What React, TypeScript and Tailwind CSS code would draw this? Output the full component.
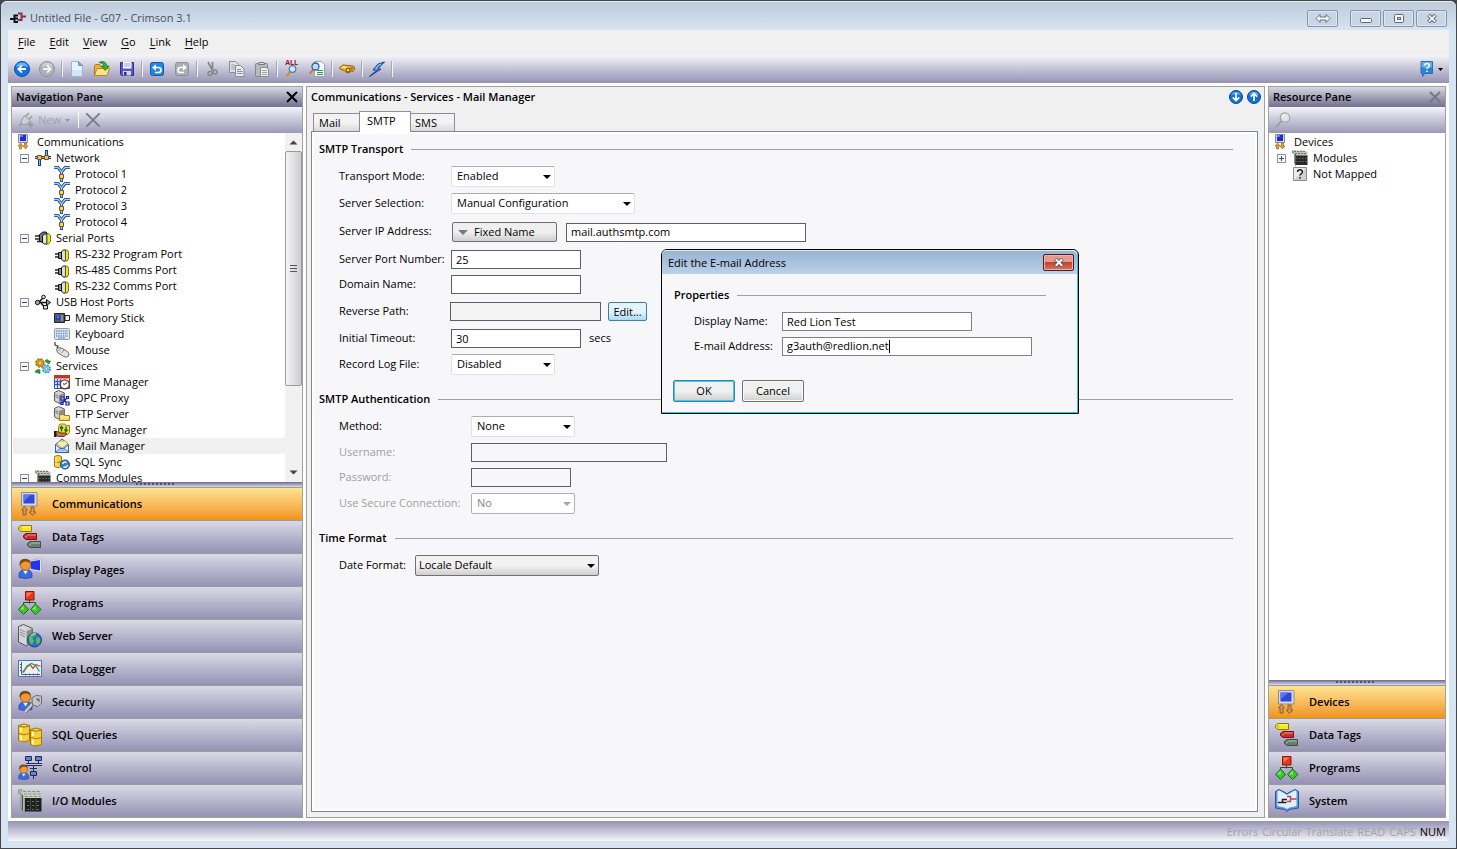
import type { ReactNode } from "react";
import { clsx } from "clsx";

type Art = () => ReactNode;

const Svg16 = ({ children }: { children: ReactNode }) => (
  <svg viewBox="0 0 16 16" className="block h-4 w-4 shrink-0" aria-hidden="true">
    {children}
  </svg>
);

const Svg24 = ({ children }: { children: ReactNode }) => (
  <svg viewBox="0 0 24 24" className="block h-6 w-6 shrink-0" aria-hidden="true">
    {children}
  </svg>
);

/* ── Toolbar icons ── */

const BackIcon = () => (
  <Svg16>
    <circle cx="8" cy="8" r="7.5" fill="#1274d8" stroke="#0b4ea6" />
    <path d="M2 6a6.3 6.3 0 0 1 12 0Q8 4 2 6" fill="#63b4f4" />
    <path d="M12 8H4.5M8 4.3 4.3 8 8 11.7" fill="none" stroke="#fff" strokeWidth="1.8" />
  </Svg16>
);

const ForwardIcon = () => (
  <Svg16>
    <circle cx="8" cy="8" r="7.5" fill="#b2b2b6" stroke="#8f8f95" />
    <path d="M2 6a6.3 6.3 0 0 1 12 0Q8 4 2 6" fill="#cfcfd2" />
    <path d="M4 8h7.5M8 4.3 11.7 8 8 11.7" fill="none" stroke="#f3f3f5" strokeWidth="1.8" />
  </Svg16>
);

const NewFileIcon = () => (
  <Svg16>
    <path d="M2.5.5h7l4 4v11h-11z" fill="#eaf3fd" stroke="#9db4d6" />
    <path d="M3 9h10v6H3z" fill="#d3e4f8" />
    <path d="M9.5.5v4h4z" fill="#7fa9e2" stroke="#6a93cf" />
  </Svg16>
);

const OpenIcon = () => (
  <Svg16>
    <path d="M.5 14.5v-10l1-1h4l1 2h6v9z" fill="#e9b63a" stroke="#a87b17" />
    <path d="m.5 14.5 2.5-7h12.5l-2.5 7z" fill="#fbe486" stroke="#b98a1e" />
    <path d="M5 1.5C9-.5 12.5 1 12.6 5h2.6l-4 4.5L7.5 5h2.3C9.800 2.500 7.500 2 5 1.500z" fill="#35b13a" stroke="#137018" strokeWidth=".7" />
  </Svg16>
);

const SaveIcon = () => (
  <Svg16>
    <path d="M1.500 1.500h13v13h-12l-1-1z" fill="#5b55c8" stroke="#332c96" />
    <path d="M4 1h8.500v6.500H4z" fill="#fff" />
    <path d="M5 3h6.500M5 5h6.500" stroke="#9c98d8" />
    <path d="M4 10h8v4.500H4z" fill="#d5d5e6" />
    <path d="M5 11h2.500v3.500H5z" fill="#332c96" />
  </Svg16>
);

const TurnIcon = ({ fill, edge, flip }: { fill: string; edge: string; flip?: boolean }) => (
  <Svg16>
    <rect x="1.500" y="1.500" width="13" height="13" rx="2" fill={fill} stroke={edge} />
    <g transform={flip ? "matrix(-1 0 0 1 16 0)" : undefined}>
      <path d="M5 6.500h4.500a2.300 2.300 0 0 1 0 5H6" fill="none" stroke="#fff" strokeWidth="1.700" />
      <path d="M3 6.500 7 3.200v6.600z" fill="#fff" />
    </g>
  </Svg16>
);

const CutIcon = () => (
  <Svg16>
    <path d="m4 1 4.500 8.500M8.500 1v7" stroke="#85858b" strokeWidth="1.700" />
    <circle cx="6" cy="12.500" r="2" fill="none" stroke="#85858b" strokeWidth="1.500" />
    <circle cx="11" cy="11" r="2" fill="none" stroke="#85858b" strokeWidth="1.500" />
  </Svg16>
);

const CopyIcon = () => (
  <Svg16>
    <path d="M.5.5h6l3 3v8h-9z" fill="#e2e2e6" stroke="#8b8b92" />
    <path d="M2 4h4M2 6h5M2 8h5" stroke="#a2a2a8" />
    <path d="M6.500 4.500h5l3.500 3.500v7.500H6.500z" fill="#ececef" stroke="#8b8b92" />
    <path d="M8 8.500h4M8 10.500h5.500M8 12.500h5.500" stroke="#8b8b92" />
  </Svg16>
);

const PasteIcon = () => (
  <Svg16>
    <rect x="1.500" y="2.500" width="12" height="13" rx="1" fill="#b9b9be" stroke="#84848a" />
    <path d="M4.500 3.500V2l1.500-.5h3l1.500.5v1.500z" fill="#dcdce0" stroke="#77777d" />
    <path d="M6.500 6.500h6l2 2v7h-8z" fill="#efeff2" stroke="#8b8b92" />
    <path d="M8 9.500h5M8 11.500h5M8 13.500h5" stroke="#a0a0a6" />
  </Svg16>
);

const FindAllIcon = () => (
  <svg viewBox="0 0 16 16" className="block h-4 w-4 overflow-visible" aria-hidden="true">
    <path d="m2.500 15 4-4.500" stroke="#d98a29" strokeWidth="2.200" />
    <circle cx="8.500" cy="8" r="3.300" fill="#cfe8fb" stroke="#4b7bb5" strokeWidth="1.200" />
    <text x="7.500" y="4" textAnchor="middle" fontSize="7" fontWeight="700" fill="#a3131b">
      ALL
    </text>
  </svg>
);

const FindInFileIcon = () => (
  <Svg16>
    <path d="M5.500.5h7l3 3v12h-10z" fill="#fafcff" stroke="#93a3c2" />
    <path d="M8 9.500h6M8 11.500h6M8 13.500h6" stroke="#2c9a39" />
    <path d="m.5 12.500 4-4" stroke="#c8832e" strokeWidth="2.200" />
    <circle cx="6.500" cy="5.500" r="3.500" fill="#bcdcf8" stroke="#315d9d" strokeWidth="1.300" />
  </Svg16>
);

const HandIcon = () => (
  <Svg16>
    <path d="M.5 6.500 4 4l5 .5 5.500.5 1.500 3-2 2.500-2-.5-2 2-3-.5-1.500-2-4-1z" fill="#eeb02c" stroke="#8a5a08" strokeWidth=".9" />
    <path d="M2 6.500 5 5l4 1-3 1.500z" fill="#fde58e" />
    <circle cx="9" cy="9" r="2" fill="#f7cf58" stroke="#6e470a" />
    <path d="M11 6.500h3l.5 1.500-2.500 1z" fill="#9a6a13" />
  </Svg16>
);

const LightningIcon = () => (
  <Svg16>
    <path d="M15.500 1 9 3 4 9h4L.5 15.500 12 8H8.500z" fill="#2f8bea" stroke="#16347c" strokeWidth=".9" strokeLinejoin="round" />
    <path d="M12 3 9.500 4 6.500 8h2" fill="none" stroke="#a8d7fb" />
  </Svg16>
);

const HelpIcon = () => (
  <Svg16>
    <path d="M2 .5h11.500v12H6l-2.500 3v-3H2z" fill="#2c86d8" stroke="#2470bb" />
    <path d="M2.500 1H13v5q-5 2-10.500 0z" fill="#64aeee" />
    <path d="M5.500 4.500Q5.700 2.600 8 2.600q2.300 0 2.300 1.900Q10.300 5.700 9 6.300 8 6.800 8 8M8 9.500v1.500" fill="none" stroke="#fff" strokeWidth="1.500" />
  </Svg16>
);

const PlugIcon = () => (
  <Svg16>
    <path d="m1 14 3-3M8 4l3-3M11 7l3-3" stroke="#9b9ba0" strokeWidth="1.600" />
    <path d="m4 7 3-3.500 5 5L9 12q-3 1.500-5 0T4 7" fill="#cfcfd4" stroke="#94949a" />
    <path d="M12.500 10v5.500M9.800 12.700h5.500" stroke="#94949a" strokeWidth="1.500" />
  </Svg16>
);

const LensIcon = () => (
  <Svg16>
    <path d="M1 15 6.500 9" stroke="#98989e" strokeWidth="1.600" />
    <circle cx="10" cy="5.500" r="4.700" fill="#e4e4e8" stroke="#a6a6ab" strokeWidth="1.300" />
    <path d="M7.500 5a2.500 2.500 0 0 1 2.500-2" fill="none" stroke="#fff" strokeWidth="1.200" />
  </Svg16>
);

/* ── Tree icons ── */

const CommsSmall = () => (
  <Svg16>
    <path d="M2.500.5h9v8h-9z" fill="#ddd9d0" stroke="#8f8b84" />
    <path d="M4 1h6v6H4z" fill="#1a2be6" />
    <path d="M4 1h3v2H4z" fill="#5a82ff" />
    <path d="M4.500 9 7 12H5.500v3h-2v-3H2zM9.500 15 12 12h-1.500V9h-2v3H7z" fill="#e2a13a" stroke="#8f5714" strokeWidth=".6" />
  </Svg16>
);

const NetworkIcon = () => (
  <Svg16>
    <path d="M0 7.500h16M4.500 7.500V16M11.500 7.500V0" stroke="#0c3f9c" strokeWidth="3" />
    <path d="M0 7.500h16M4.500 7.500V15M11.500 7.500V1" stroke="#8dbdf5" />
    <path d="M2.500 5.500h4v4h-4zM9.500 5.500h4v4h-4z" fill="#f4c24a" stroke="#85520a" />
  </Svg16>
);

const ProtocolIcon = () => (
  <Svg16>
    <path d="M0 1.500h4L7.500 6 11 1.500h5" fill="none" stroke="#173f7c" strokeWidth="3" />
    <path d="M7.500 6v10" stroke="#0c4fb4" strokeWidth="3" />
    <path d="M0 1.500h4L7.500 6 11 1.500h5M7.500 6v9" fill="none" stroke="#a5cefa" strokeWidth="1.300" />
    <path d="M5.500 8.500h4v4h-4z" fill="#f9d467" stroke="#85520a" />
  </Svg16>
);

const SerialPort = () => (
  <Svg16>
    <path d="M1 8h5M1 11h5" stroke="#222" strokeWidth="1.500" />
    <path d="M4.500 6.500h3v6h-3z" fill="#8e8e8e" stroke="#111" />
    <path d="m7.500 5.500 2-1.500h2v11h-2l-2-1.500z" fill="#dcdcdc" stroke="#111" />
    <path d="M11.500 4h1.500l1.500 2v7L13 15h-1.500z" fill="#ece71f" stroke="#55550c" strokeWidth=".8" />
  </Svg16>
);

const SerialPorts = () => (
  <Svg16>
    <path d="M0 6h5M0 9h5M2 11.500h5" stroke="#222" strokeWidth="1.500" />
    <path d="M4.500 4.500 8 2h3l1.500 1.500v8L9 13l-4.500-2z" fill="#777" stroke="#111" />
    <path d="m7.500 6 2-2h2.500v10h-2.500l-2-1.500z" fill="#e6e6e6" stroke="#111" />
    <path d="M12 3.500h1.500l2 2v6l-2 2.500H12z" fill="#ece71f" stroke="#55550c" strokeWidth=".8" />
  </Svg16>
);

const UsbIcon = () => (
  <Svg16>
    <path d="M2 8.500h11M4 8l4-4h1M6 9l3 3.500h1" fill="none" stroke="#111" strokeWidth="1.500" />
    <circle cx="2.500" cy="8.500" r="2.200" fill="#aaa" stroke="#111" />
    <circle cx="8.500" cy="3" r="1.800" fill="#ddd" stroke="#111" />
    <path d="M8.500 11.500h4V15h-4z" fill="#ddd" stroke="#111" />
    <path d="m11.500 5.500 4 3-4 3z" fill="#999" stroke="#111" />
  </Svg16>
);

const MemoryStickIcon = () => (
  <Svg16>
    <path d="M.5 3.500h10v9H.5z" fill="#5b5b66" stroke="#23232c" />
    <path d="M11 5.500h4.500v5H11z" fill="#f0f0f0" stroke="#222" />
    <circle cx="4" cy="8" r="2.300" fill="#1c35f0" />
    <path d="M3 6.500h1.500V8H3z" fill="#8fb1ff" />
    <path d="M7 5h2v6H7z" fill="#8b8b96" />
  </Svg16>
);

const KeyboardIcon = () => (
  <Svg16>
    <rect x=".5" y="2.500" width="15" height="11" rx="1" fill="#dfe6ec" stroke="#9a9a9a" />
    <path d="M2 5h12M2 7.500h12M2 10h12" stroke="#5c93c4" strokeWidth="1.600" strokeDasharray="1.400 .9" />
    <path d="M4 12h7" stroke="#5c93c4" />
  </Svg16>
);

const MouseIcon = () => (
  <Svg16>
    <path d="M1 0v3l3 1-1 2 3 1" fill="none" stroke="#444" strokeWidth="1.200" />
    <path d="M2.500 7.500q2-3 5-1.500l6 3.500q2.500 2 1 4.500-2 2-5 .5l-6-4z" fill="#e4e4dd" stroke="#6c6c66" />
    <path d="m4.500 9 3-3M7.500 11l3-3.500" stroke="#85857e" />
  </Svg16>
);

const ServicesIcon = () => (
  <Svg16>
    <circle cx="5" cy="5" r="4" fill="#d99a25" stroke="#a06b0c" strokeWidth="1.600" strokeDasharray="2 1.140" />
    <circle cx="5" cy="5" r="1.400" fill="#fff" stroke="#a06b0c" strokeWidth=".6" />
    <circle cx="11.500" cy="11" r="3.700" fill="#8ccbf3" stroke="#3783c4" strokeWidth="1.500" strokeDasharray="1.800 1.100" />
    <circle cx="11.500" cy="11" r="1.300" fill="#fff" stroke="#3783c4" strokeWidth=".6" />
    <path d="M10 3q2-3 4 0h1.500L14 6l-3-2zM5 12q-2-1-3.500 0L0 14l5 1.500z" fill="#25a32c" stroke="#0c6d13" strokeWidth=".6" />
  </Svg16>
);

const TimeIcon = () => (
  <Svg16>
    <path d="M.5 1.500h15v13H.5z" fill="#fff" stroke="#2450a8" />
    <path d="M0 1h16v3.500H0z" fill="#c4371f" />
    <path d="M1 7.500h14M1 10.500h9M3.500 5v9M6.500 5v9" stroke="#2c62c4" strokeWidth="1.300" />
    <circle cx="10.800" cy="10.300" r="4.500" fill="#fff" stroke="#8b2219" strokeWidth="1.300" />
    <path d="M13 8.500 10.800 10.300 9 9.800" fill="none" stroke="#222" />
  </Svg16>
);

const ServerBox = () => (
  <>
    <path d="M.5 2.500 4.500.5l6 2.500v8l-4 3-6-3z" fill="#d4d4d2" stroke="#5c5c5c" />
    <path d="m5 5 5.500-2v8L6.500 14 5 13z" fill="#8d8d8b" />
    <path d="M1.500 4.500 4.500 6M1.500 6.500l3 1.500" stroke="#777" />
  </>
);

const OpcIcon = () => (
  <Svg16>
    <ServerBox />
    <path d="M7 7h3v3H7zM12 12h3v3h-3zM12.500 6.500h2v2h-2zM7 12.500h2v2H7zM9.500 9.500l3 3M12.500 8.500 9 12.500" fill="#dfe5ff" stroke="#1218c8" strokeWidth="1.200" />
  </Svg16>
);

const FtpIcon = () => (
  <Svg16>
    <ServerBox />
    <path d="M5.500 14.500v-6h4l1 1h5v5z" fill="#f7dc5a" stroke="#a47e13" />
    <path d="M6 11h9" stroke="#fff3a8" />
  </Svg16>
);

const SyncIcon = () => (
  <Svg16>
    <path d="M4.500 4.500 6 2h5l1 1.500h3.500v7l-2 2h-9z" fill="#f6d552" stroke="#a8800f" />
    <path d="M7.500 9.500V5M6 6.500 7.500 4.500 9 6.500M12 4.500V9M10.500 7.500 12 9.500l1.500-2" fill="none" stroke="#0c7d1a" strokeWidth="1.400" />
    <path d="M0 9.500h3.500L7 11h5l1 1-3 2.500H4.500L0 13z" fill="#b87a3e" stroke="#3d210a" strokeWidth=".8" />
    <path d="M0 9h2.500v6H0z" fill="#2b1b10" />
  </Svg16>
);

const MailIcon = () => (
  <Svg16>
    <path d="M1.500 6.500 8 1l6.500 5.500v8h-13z" fill="#dbeafc" stroke="#3e5f9f" />
    <path d="M3 6 5 3h7l1.500 3-5.500 4z" fill="#f8efa4" stroke="#a89a4a" strokeWidth=".7" />
    <path d="m1.500 6.500 5 4h3l5-4M1.500 14.500 6.500 10M14.500 14.500l-5-4.500" fill="none" stroke="#3e5f9f" />
    <path d="M4 13.500 7 11h2l3 2.500z" fill="#8bbbef" />
  </Svg16>
);

const SqlSyncIcon = () => (
  <Svg16>
    <path d="M.5 2.500Q4 0 7.500 2.500v10Q4 15 .5 12.500z" fill="#f5d044" stroke="#a37a08" />
    <path d="M.5 7.500q3.500 2 7 0" fill="none" stroke="#a37a08" />
    <path d="M2 3v9" stroke="#fff4b0" />
    <circle cx="11" cy="10.500" r="4.500" fill="#3a80cd" stroke="#154683" />
    <path d="M8.500 10a2.600 2.600 0 0 1 4-1.500M13.500 11a2.600 2.600 0 0 1-4 1.800" fill="none" stroke="#fff" strokeWidth="1.400" />
  </Svg16>
);

const ModulesIcon = () => (
  <Svg16>
    <path d="M0 .5h4V15l-2-1.500V4L0 3z" fill="#8d8d88" />
    <path d="M1 .5h11l3.500 1.500v4H3z" fill="#c4c4bf" />
    <path d="M2 1.500h11M3 3.500h12" stroke="#74746f" strokeDasharray="2 1" />
    <path d="M4 5.500h11.500V15H4z" fill="#2a2a29" />
    <path d="M4.500 8.500h10M4.500 11.500h10" stroke="#8b8b86" strokeDasharray="1 2" />
    <path d="M3.500 4v11.500" stroke="#5a5a55" />
  </Svg16>
);

const NotMappedIcon = () => (
  <Svg16>
    <path d="M1.500 1.500h13v13h-13z" fill="#d0d0d0" stroke="#8c8c8c" />
    <path d="M2 2h12L2 14z" fill="#ececec" />
    <path d="M5.500 6Q5.700 3.800 8 3.800T10.400 6Q10.400 7.200 9 7.800 8 8.300 8 9.500M8 11v1.700" fill="none" stroke="#222" strokeWidth="1.400" />
  </Svg16>
);

/* ── Category icons ── */

const Person = () => (
  <>
    <path d="M1 19.500v-4l2-3h9l2 3v4q-6.500 2-13 0z" fill="#3c6ae0" stroke="#20409c" strokeWidth=".7" />
    <path d="m5 12.500 2.500 4 2.500-4z" fill="#e4efff" />
    <circle cx="7.500" cy="7" r="5.200" fill="#ef9a35" stroke="#8a4c0f" strokeWidth=".7" />
    <path d="M1.500 7Q1 1 7 .8 13 1 12.800 6 11 3 7 3.500 3.500 4 2.500 7z" fill="#7d4a16" />
  </>
);

const CommsArt = () => (
  <Svg24>
    <path d="M3.500.5H18q1 0 1 1V14H3.500z" fill="#d9dade" stroke="#8a8b95" />
    <path d="M5.500 2.500h11v9h-11z" fill="#3048d8" />
    <path d="m5.500 2.500h8l-8 7z" fill="#5c78ee" />
    <path d="M6.500 14.500 9.500 18H8v5H5v-5H3.500zM14.500 23.500l3.300-3.500H16v-5h-3v5h-1.800z" fill="#d09a5c" stroke="#8a5320" strokeWidth=".9" />
  </Svg24>
);

const Tag = ({ fill, edge, at }: { fill: string; edge: string; at: string }) => (
  <g transform={at}>
    <path d="M3 .5h10.500v6H3L.5 4.500v-2z" fill={fill} stroke={edge} />
    <path d="M4 2h9" stroke="#fff" strokeOpacity=".5" />
    <circle cx="3" cy="3.500" r=".9" fill="#fff" stroke={edge} strokeWidth=".5" />
  </g>
);

const TagsArt = () => (
  <Svg24>
    <Tag fill="#f7e71c" edge="#8c7c08" at="translate(0 0)" />
    <Tag fill="#d22a2a" edge="#7c1010" at="translate(5 8)" />
    <Tag fill="#66806a" edge="#3c4f40" at="translate(9 16)" />
  </Svg24>
);

const DisplayArt = () => (
  <Svg24>
    <path d="m12 2.500 11.500-2v14l-11.500-2z" fill="#e9e9f0" stroke="#b4b4c4" />
    <path d="m13 3.500 9-1.500v10.500l-9-1.500z" fill="#2033ee" />
    <Person />
  </Svg24>
);

const ProgramsArt = () => (
  <Svg24>
    <path d="M11.500 9v3.500M5.500 14v-2.500h12V14" fill="none" stroke="#125c1c" />
    <path d="M7.500.5h8.500v8.500H7.500z" fill="#ee3518" stroke="#8c1608" />
    <path d="M8.500 1.500h6l-6 5z" fill="#fb7c5e" />
    <path d="m5.500 13 5 5.500-5 5-5-5zM17.500 13l5.500 5.500-5.500 5-5-5z" fill="#3cc72c" stroke="#176d12" />
    <path d="m5.500 14.500-3.500 4h4zM17.500 14.500l-3.500 4h4z" fill="#86e676" />
  </Svg24>
);

const WebArt = () => (
  <Svg24>
    <path d="M.5 2.500 5.500.5l9 4v13l-6 4.500-8-4z" fill="#d6d6d6" stroke="#565656" />
    <path d="m8.500 7 6-2.500v13l-6 4.500z" fill="#8d8d8d" />
    <path d="m2 5.500 5 2.500M2 8l5 2.500M2 10.500 7 13" stroke="#8a8a8a" />
    <circle cx="16.500" cy="16" r="7" fill="#2a6fd4" stroke="#173f87" />
    <path d="M11 13q3-4.500 7-3.500l-1.500 3-2.500 1 2 3-2 4.500q-3.500-3-3-8zM18.500 13l3.500 1 .5 3-3 4-1.500-4z" fill="#58c048" />
    <path d="M13 11q3-2 5-1" fill="none" stroke="#c8f0c0" />
  </Svg24>
);

const LoggerArt = () => (
  <Svg24>
    <path d="M.5 3.500h23v16H.5z" fill="#e9f2fb" stroke="#4a74b4" />
    <path d="M3.500 5v12.500H22" fill="none" stroke="#5c5c6c" />
    <path d="M2 7.500h2M2 10.500h2M2 13.500h2M7.500 16.500v2M11.500 16.500v2M15.500 16.500v2M19.500 16.500v2" stroke="#5c5c6c" />
    <path d="m4.500 15.500 4-5 3.500-3 3 4 3-4 4.500 2" fill="none" stroke="#e0473b" strokeWidth="1.300" />
    <path d="M5.500 15.500 9 9l4.500-2.500 4 2 4 6" fill="none" stroke="#2f9b56" strokeWidth="1.300" />
  </Svg24>
);

const SecurityArt = () => (
  <Svg24>
    <Person />
    <path d="m7 22 9-10" stroke="#6d6d6d" strokeWidth="4" />
    <path d="m7 22 9-10" stroke="#cfcfcf" strokeWidth="2" />
    <path d="m14 8 4-2.500 5.500.5v7l-3.500 3.500-5.500-1.500z" fill="#c6c6c6" stroke="#6d6d6d" />
    <path d="m17.500 8.500 4 0v4z" fill="#6d6d6d" />
  </Svg24>
);

const Drum = ({ at }: { at: string }) => (
  <g transform={at}>
    <path d="M.5 2.500Q6-.5 11.500 2.500v15q-5.500 3-11 0z" fill="#f6d03c" stroke="#a67805" />
    <path d="M.5 3q5.500 2.500 11 0M.5 10.500q5.500 2.500 11 0" fill="none" stroke="#a67805" />
    <path d="M3 5v4M3 12.500v5" stroke="#fff6b8" strokeWidth="2" />
  </g>
);

const SqlArt = () => (
  <Svg24>
    <Drum at="translate(0 0)" />
    <Drum at="translate(12 4)" />
  </Svg24>
);

const ControlArt = () => (
  <Svg24>
    <path d="M8 7.500h16M8 9.500h16M10.500 5v2M20.500 5v2M15.500 9.500V16M12 12.500h7M15.500 20v3" stroke="#22305c" />
    <path d="M7.500.5h6v4h-6zM17.500.5h6v4h-6zM12.500 15.500h6v4h-6z" fill="#5c86d8" stroke="#1b2a5c" />
    <g transform="translate(0 8) scale(.76)">
      <Person />
    </g>
  </Svg24>
);

const IoArt = () => (
  <Svg24>
    <path d="m0 1.500 4-1L7 4v19l-4-2.500V5L0 4z" fill="#b4b8ac" stroke="#6c6f66" strokeWidth=".6" />
    <path d="M4 1h18l2 2v6H7L4 4z" fill="#c9ccc2" />
    <path d="M5 2.500h17M6 5h17M7 7.500h16" stroke="#8c8f86" strokeDasharray="3 1.500" />
    <path d="M7 9h16.500v13.500H7z" fill="#1b1e1a" />
    <path d="M9 12.500H23M9 16.500H23M9 20.500H23" stroke="#6b7267" strokeDasharray="2 3" />
    <path d="M12.500 9v13.500M18 9v13.500" stroke="#474c44" />
    <path d="M4.500 6v15" stroke="#4f534b" />
  </Svg24>
);

const SystemArt = () => (
  <Svg24>
    <path d="M.5 2.500 4 .5l7 3.500L12 5l1-1 7-3.500 3.500 2v16.500l-9 1.500-2.500 2-2.500-2-9-1.500z" fill="#5d93dd" stroke="#27559f" />
    <path d="m2.500 2 2-.5L12 6v14l-2.500-1.500-7-1.500zM21.500 2l-2-.5L12 6v14l2.500-1.500 7-1.500z" fill="#e2effc" />
    <path d="M3 13.500h4.500v-3H12M7.500 13.500h4" fill="none" stroke="#222" strokeWidth="1.500" />
    <path d="M12 7.500h3.500v5H12M15.500 10h6" fill="none" stroke="#b8474a" strokeWidth="1.500" />
  </Svg24>
);

/* ── Data ── */

const menus = ["File", "Edit", "View", "Go", "Link", "Help"];

const toolbar: ({ label: string; Icon: Art } | null)[] = [
  { label: "Back", Icon: BackIcon },
  { label: "Forward", Icon: ForwardIcon },
  null,
  { label: "New", Icon: NewFileIcon },
  { label: "Open", Icon: OpenIcon },
  { label: "Save", Icon: SaveIcon },
  null,
  { label: "Undo", Icon: () => <TurnIcon fill="#2287e2" edge="#115aaa" /> },
  { label: "Redo", Icon: () => <TurnIcon fill="#adadb2" edge="#8e8e94" flip /> },
  null,
  { label: "Cut", Icon: CutIcon },
  { label: "Copy", Icon: CopyIcon },
  { label: "Paste", Icon: PasteIcon },
  null,
  { label: "Find all", Icon: FindAllIcon },
  { label: "Find in file", Icon: FindInFileIcon },
  null,
  { label: "Browse", Icon: HandIcon },
  null,
  { label: "Send", Icon: LightningIcon },
  null,
];

interface Node {
  label: string;
  Icon: Art;
  level: 0 | 1 | 2;
  mark?: "+" | "-";
  selected?: boolean;
}

const navTree: Node[] = [
  { label: "Communications", Icon: CommsSmall, level: 0 },
  { label: "Network", Icon: NetworkIcon, level: 1, mark: "-" },
  { label: "Protocol 1", Icon: ProtocolIcon, level: 2 },
  { label: "Protocol 2", Icon: ProtocolIcon, level: 2 },
  { label: "Protocol 3", Icon: ProtocolIcon, level: 2 },
  { label: "Protocol 4", Icon: ProtocolIcon, level: 2 },
  { label: "Serial Ports", Icon: SerialPorts, level: 1, mark: "-" },
  { label: "RS-232 Program Port", Icon: SerialPort, level: 2 },
  { label: "RS-485 Comms Port", Icon: SerialPort, level: 2 },
  { label: "RS-232 Comms Port", Icon: SerialPort, level: 2 },
  { label: "USB Host Ports", Icon: UsbIcon, level: 1, mark: "-" },
  { label: "Memory Stick", Icon: MemoryStickIcon, level: 2 },
  { label: "Keyboard", Icon: KeyboardIcon, level: 2 },
  { label: "Mouse", Icon: MouseIcon, level: 2 },
  { label: "Services", Icon: ServicesIcon, level: 1, mark: "-" },
  { label: "Time Manager", Icon: TimeIcon, level: 2 },
  { label: "OPC Proxy", Icon: OpcIcon, level: 2 },
  { label: "FTP Server", Icon: FtpIcon, level: 2 },
  { label: "Sync Manager", Icon: SyncIcon, level: 2 },
  { label: "Mail Manager", Icon: MailIcon, level: 2, selected: true },
  { label: "SQL Sync", Icon: SqlSyncIcon, level: 2 },
  { label: "Comms Modules", Icon: ModulesIcon, level: 1, mark: "-" },
];

const resourceTree: Node[] = [
  { label: "Devices", Icon: CommsSmall, level: 0 },
  { label: "Modules", Icon: ModulesIcon, level: 1, mark: "+" },
  { label: "Not Mapped", Icon: NotMappedIcon, level: 1 },
];

const navCategories = [
  { label: "Communications", Icon: CommsArt },
  { label: "Data Tags", Icon: TagsArt },
  { label: "Display Pages", Icon: DisplayArt },
  { label: "Programs", Icon: ProgramsArt },
  { label: "Web Server", Icon: WebArt },
  { label: "Data Logger", Icon: LoggerArt },
  { label: "Security", Icon: SecurityArt },
  { label: "SQL Queries", Icon: SqlArt },
  { label: "Control", Icon: ControlArt },
  { label: "I/O Modules", Icon: IoArt },
];

const resourceCategories = [
  { label: "Devices", Icon: CommsArt },
  { label: "Data Tags", Icon: TagsArt },
  { label: "Programs", Icon: ProgramsArt },
  { label: "System", Icon: SystemArt },
];

/* ── Panes ── */

function Cross({ size, className }: { size: number; className: string }) {
  return (
    <svg viewBox="0 0 12 12" width={size} height={size} className={className} aria-hidden="true">
      <path d="m1 1 10 10M11 1 1 11" stroke="currentColor" strokeWidth={size > 12 ? 1.3 : 2} />
    </svg>
  );
}

function PaneHeader({ title, dim }: { title: string; dim?: boolean }) {
  return (
    <div className="flex h-5 shrink-0 items-center justify-between bg-linear-to-b from-[#d8d8e5] to-[#73708f] pr-1 pl-1">
      <h2 className="font-semibold">{title}</h2>
      <button type="button" aria-label={`Close ${title}`}>
        <Cross size={12} className={dim ? "text-[#77777c]" : "text-black"} />
      </button>
    </div>
  );
}

function Tree({ nodes }: { nodes: Node[] }) {
  return (
    <ul className="min-w-0 flex-1 overflow-hidden pt-px pl-px">
      {nodes.map(({ label, Icon, level, mark, selected }) => (
        <li
          key={label}
          className={clsx(
            "flex h-4 items-center gap-[5px] whitespace-nowrap",
            level === 0 && "pl-[3px]",
            level === 1 && "pl-[7px]",
            level === 2 && "pl-[41px]",
            selected && "bg-[#f0f0f0]",
          )}
        >
          {level === 1 && (
            <span className="mr-px flex w-[9px] shrink-0">
              {mark && (
                <svg viewBox="0 0 9 9" className="block h-[9px] w-[9px]" role="img" aria-label={mark === "+" ? "Expand" : "Collapse"}>
                  <rect x=".5" y=".5" width="8" height="8" fill="#fbfbfb" stroke="#919191" />
                  <path d={mark === "+" ? "M2 4.500h5M4.500 2v5" : "M2 4.500h5"} stroke="#2f4a94" />
                </svg>
              )}
            </span>
          )}
          <Icon />
          <span>{label}</span>
        </li>
      ))}
    </ul>
  );
}

function ScrollBar() {
  return (
    <div className="flex w-[17px] shrink-0 flex-col bg-[#f1f1f1]">
      <svg viewBox="0 0 17 17" className="h-[18px] w-[17px] shrink-0" aria-hidden="true">
        <path d="m4.500 11 4-4 4 4z" fill="#444" />
      </svg>
      <div className="flex flex-[3] flex-col items-center justify-center gap-[2px] rounded-xs border border-[#9a9a9a] bg-linear-to-r from-[#f5f5f5] to-[#cdcdd0]">
        <span className="h-px w-[7px] bg-[#555]" />
        <span className="h-px w-[7px] bg-[#555]" />
        <span className="h-px w-[7px] bg-[#555]" />
      </div>
      <div className="flex-1" />
      <svg viewBox="0 0 17 17" className="h-[18px] w-[17px] shrink-0" aria-hidden="true">
        <path d="m4.500 6 4 4 4-4z" fill="#444" />
      </svg>
    </div>
  );
}

function Splitter() {
  return (
    <div className="flex h-[5px] shrink-0 justify-center bg-linear-to-b from-[#6e6b90] to-[#dcdce8] pr-1">
      <span className="mt-px w-[38px] border-t-2 border-dotted border-[#55555f]" />
    </div>
  );
}

function Categories({ items }: { items: { label: string; Icon: Art }[] }) {
  return (
    <nav className="shrink-0">
      {items.map(({ label, Icon }, i) => (
        <button
          key={label}
          type="button"
          className={clsx(
            "flex h-[33px] w-full items-center gap-[10px] border-t border-[#9c9c9c] bg-linear-to-b pl-[6px] text-left font-semibold",
            i === 0 ? "from-[#fce592] to-[#f0930f]" : "from-[#dadae6] to-[#9692b4]",
          )}
        >
          <Icon />
          {label}
        </button>
      ))}
    </nav>
  );
}

/* ── Form controls ── */

function Heading({ children }: { children: string }) {
  return (
    <div className="flex h-4 items-center gap-2">
      <h3 className="font-semibold">{children}</h3>
      <span className="h-px flex-1 bg-[#a0a0a0]" />
    </div>
  );
}

function Row({ id, label, labelWidth, disabled, children }: {
  id: string;
  label: string;
  labelWidth: string;
  disabled?: boolean;
  children: ReactNode;
}) {
  return (
    <div className="flex items-center pl-5">
      <label htmlFor={id} className={clsx("shrink-0 pb-[2px] whitespace-nowrap", labelWidth, disabled && "text-[#a0a0a0]")}>
        {label}
      </label>
      {children}
    </div>
  );
}

function TextBox({ id, value = "", width, disabled, className = "border-[#5f5f63] bg-white" }: {
  id: string;
  value?: string;
  width: string;
  disabled?: boolean;
  className?: string;
}) {
  return (
    <input
      id={id}
      type="text"
      defaultValue={value}
      disabled={disabled}
      className={clsx("h-[19px] border pb-px pl-1 outline-none", width, className)}
    />
  );
}

function Select({ id, value, width, variant = "flat" }: {
  id: string;
  value: string;
  width: string;
  variant?: "flat" | "raised" | "disabled";
}) {
  return (
    <div className={clsx("relative", width)}>
      <select
        id={id}
        disabled={variant === "disabled"}
        className={clsx(
          "block h-[21px] w-full appearance-none rounded-xs border pb-px outline-none",
          variant === "flat" && "border-[#dfe0e8] border-t-[#abadb3] bg-white pl-[5px]",
          variant === "disabled" && "border-[#b0b0b0] bg-white pl-[5px] text-[#838383] opacity-100",
          variant === "raised" && "border-[#707070] bg-linear-to-b from-[#f2f2f2] from-50% to-[#cfcfcf] pl-[3px]",
        )}
      >
        <option>{value}</option>
      </select>
      <svg
        viewBox="0 0 8 4"
        className={clsx(
          "pointer-events-none absolute top-[9px] right-1 h-1 w-2",
          variant === "disabled" ? "text-[#a8a8a8]" : "text-black",
        )}
        aria-hidden="true"
      >
        <path d="M0 0h8L4 4z" fill="currentColor" />
      </svg>
    </div>
  );
}

function SmtpForm() {
  return (
    <form className="flex flex-1 flex-col gap-4 border border-[#828790] bg-[#f7f7fa] pt-[9px] pr-6 pl-[7px] shadow-[inset_0_0_0_2px_#fff]">
      <section>
        <Heading>SMTP Transport</Heading>
        <div className="mt-[9px] flex flex-col gap-[6px]">
          <Row id="mode" label="Transport Mode:" labelWidth="w-[112px]">
            <Select id="mode" value="Enabled" width="w-[104px]" />
          </Row>
          <Row id="server" label="Server Selection:" labelWidth="w-[112px]">
            <Select id="server" value="Manual Configuration" width="w-[184px]" />
          </Row>
          <div className="py-[2px]">
            <Row id="ip" label="Server IP Address:" labelWidth="w-[112px]">
              <button
                type="button"
                className="ml-px flex h-5 w-[105px] items-center gap-[6px] rounded-xs border border-[#707070] bg-linear-to-b from-[#efefef] from-50% to-[#cfcfcf] pl-[5px]"
              >
                <svg viewBox="0 0 10 5" className="h-[5px] w-[10px]" aria-hidden="true">
                  <path d="M0 0h10L5 5z" fill="#77797c" />
                </svg>
                Fixed Name
              </button>
              <TextBox id="ip" value="mail.authsmtp.com" width="ml-[9px] w-[240px]" />
            </Row>
          </div>
          <Row id="port" label="Server Port Number:" labelWidth="w-[112px]">
            <TextBox id="port" value="25" width="w-[130px]" />
          </Row>
          <Row id="domain" label="Domain Name:" labelWidth="w-[112px]">
            <TextBox id="domain" width="w-[130px]" />
          </Row>
          <div className="py-[2px]">
            <Row id="reverse" label="Reverse Path:" labelWidth="w-[111px]">
              <TextBox id="reverse" width="w-[151px]" className="border-[#5f5f63] bg-[#f3f3f3]" disabled />
              <button
                type="button"
                className="ml-[7px] h-[19px] w-[39px] rounded-xs border border-[#3c7fb1] bg-linear-to-b from-[#e3f4fc] from-50% to-[#a9dbf5]"
              >
                Edit...
              </button>
            </Row>
          </div>
          <Row id="timeout" label="Initial Timeout:" labelWidth="w-[112px]">
            <TextBox id="timeout" value="30" width="w-[130px]" />
            <span className="ml-2 pb-[2px]">secs</span>
          </Row>
          <Row id="log" label="Record Log File:" labelWidth="w-[112px]">
            <Select id="log" value="Disabled" width="w-[104px]" />
          </Row>
        </div>
      </section>

      <section>
        <Heading>SMTP Authentication</Heading>
        <div className="mt-[9px] flex flex-col gap-[6px]">
          <Row id="method" label="Method:" labelWidth="w-[132px]">
            <Select id="method" value="None" width="w-[104px]" />
          </Row>
          <Row id="user" label="Username:" labelWidth="w-[132px]" disabled>
            <TextBox id="user" width="w-[196px]" className="border-[#5f5f63] bg-[#f7f7fa]" disabled />
          </Row>
          <Row id="password" label="Password:" labelWidth="w-[132px]" disabled>
            <TextBox id="password" width="w-[100px]" className="border-[#5f5f63] bg-[#f7f7fa]" disabled />
          </Row>
          <Row id="secure" label="Use Secure Connection:" labelWidth="w-[132px]" disabled>
            <Select id="secure" value="No" width="w-[104px]" variant="disabled" />
          </Row>
        </div>
      </section>

      <section>
        <Heading>Time Format</Heading>
        <div className="mt-[9px]">
          <Row id="date" label="Date Format:" labelWidth="w-[76px]">
            <Select id="date" value="Locale Default" width="w-[184px]" variant="raised" />
          </Row>
        </div>
      </section>
    </form>
  );
}

const roundArrow = (d: string) => (
  <svg viewBox="0 0 14 14" className="h-[14px] w-[14px]" aria-hidden="true">
    <circle cx="7" cy="7" r="6.500" fill="#1470d6" stroke="#0b4694" />
    <path d="M2 5a5.400 5.400 0 0 1 10 0Q7 3.500 2 5" fill="#5aaaf0" />
    <path d={d} fill="none" stroke="#fff" strokeWidth="1.700" />
  </svg>
);

function EditorPane() {
  return (
    <main className="flex min-w-0 flex-1 flex-col border border-[#a0a0a0] bg-[#f0f0f0] pr-[6px] pb-[5px] pl-1">
      <div className="-mr-[3px] flex h-5 items-center gap-1">
        <h1 className="flex-1 font-semibold">Communications - Services - Mail Manager</h1>
        <button type="button" aria-label="Next">{roundArrow("M7 3v7.500M3.800 7.300 7 10.500l3.200-3.200")}</button>
        <button type="button" aria-label="Previous">{roundArrow("M7 11V3.500M3.800 6.700 7 3.500l3.200 3.200")}</button>
      </div>
      <div className="z-10 mt-1 -mb-px flex items-end pl-[2px]" role="tablist">
        <button type="button" role="tab" className="mb-px h-[18px] w-[46px] border border-r-0 border-b-0 border-[#8c8e95] bg-linear-to-b from-[#f3f3f3] from-50% to-[#d9d9d9] pl-[5px] text-left">
          Mail
        </button>
        <button type="button" role="tab" aria-selected="true" className="h-[21px] w-[52px] border border-b-0 border-[#8c8e95] bg-white pb-[2px] pl-[7px] text-left">
          SMTP
        </button>
        <button type="button" role="tab" className="mb-px h-[18px] w-[44px] border border-b-0 border-l-0 border-[#8c8e95] bg-linear-to-b from-[#f3f3f3] from-50% to-[#d9d9d9] pl-1 text-left">
          SMS
        </button>
      </div>
      <SmtpForm />
    </main>
  );
}

function AddressDialog() {
  return (
    <div
      role="dialog"
      aria-label="Edit the E-mail Address"
      className="absolute top-[249px] left-[661px] z-20 flex h-[165px] w-[418px] flex-col rounded-t-md border border-black bg-[#f7f7fa] shadow-[inset_-1px_-1px_0_#35c5e3]"
    >
      <div className="mr-px flex h-6 shrink-0 items-center justify-between rounded-t-[5px] border-t border-[#dce9f5] bg-linear-to-b from-[#98b4d2] to-[#bad1ea] pr-[3px] pl-[6px]">
        <span>Edit the E-mail Address</span>
        <button
          type="button"
          aria-label="Close dialog"
          className="flex h-[17px] w-[31px] items-center justify-center rounded-xs border border-[#4e1a24] bg-linear-to-b from-[#e59a8c] from-45% via-[#c0432f] via-50% to-[#d27460] shadow-[inset_0_0_0_1px_#eab5aa]"
        >
          <svg viewBox="0 0 12 9" className="h-[9px] w-3" aria-hidden="true">
            <path d="m2.500 1 7 7M9.500 1l-7 7" stroke="#4b4f63" strokeWidth="3.600" />
            <path d="m2.800 1.300 6.400 6.400M9.200 1.300 2.800 7.700" stroke="#fff" strokeWidth="2" />
          </svg>
        </button>
      </div>
      <form className="flex flex-1 flex-col pt-[13px] pl-3">
        <div className="mr-8">
          <Heading>Properties</Heading>
        </div>
        <div className="mt-[9px] flex flex-col gap-[6px]">
          <Row id="display-name" label="Display Name:" labelWidth="w-[88px]">
            <TextBox id="display-name" value="Red Lion Test" width="w-[190px]" className="border-[#7d8089] bg-white" />
          </Row>
          <Row id="email" label="E-mail Address:" labelWidth="w-[88px]">
            <div className="flex h-[19px] w-[250px] items-center border border-[#7d8089] bg-white pl-1">
              <input id="email" type="text" defaultValue="g3auth@redlion.net" className="field-sizing-content pb-px outline-none" />
              <span className="h-[13px] w-px bg-black" />
            </div>
          </Row>
        </div>
        <div className="mt-6 flex gap-[7px] -ml-px">
          <button type="button" className="h-[22px] w-[62px] rounded-xs border border-[#3c7fb1] bg-linear-to-b from-[#f0f0f0] from-50% to-[#cfcfcf] shadow-[inset_0_0_0_1px_#43c6f0]">
            OK
          </button>
          <button type="button" className="h-[22px] w-[62px] rounded-xs border border-[#707070] bg-linear-to-b from-[#f0f0f0] from-50% to-[#cfcfcf] shadow-[inset_0_0_0_1px_#fafafa]">
            Cancel
          </button>
        </div>
      </form>
    </div>
  );
}

/* ── Window chrome ── */

const frameButton =
  "flex h-[17px] w-[31px] items-center justify-center rounded-xs border border-[#8593ac] bg-[#c8d6e4] shadow-[inset_0_0_0_1px_#dce7f2]";

function TitleBar() {
  return (
    <header className="-mx-[7px] flex h-[29px] shrink-0 items-center rounded-t-md border-t border-[#e6eef6] bg-linear-to-b from-[#bdcbda] to-[#d7e4f1] pt-[6px] pr-[9px] pb-[2px] pl-[9px]">
      <svg viewBox="0 0 16 12" className="h-3 w-4" aria-hidden="true">
        <path d="M0 7h3.500M8 3.500H4.500v6.500h3.500M5 6.500h3" fill="none" stroke="#111" strokeWidth="2" />
        <path d="M8 1.500h3.500V8H7.500M11.500 4.500H16" fill="none" stroke="#94313f" strokeWidth="2" />
      </svg>
      <span className="ml-1 flex-1 text-[#45505c]">Untitled File - G07 - Crimson 3.1</span>
      <button type="button" aria-label="Resize" className={clsx(frameButton, "mr-3")}>
        <svg viewBox="0 0 16 9" className="h-[9px] w-4" aria-hidden="true">
          <path d="m1 4.500 4-4v2.500h6V.5l4 4-4 4V6H5v2.500z" fill="#f5f8fb" stroke="#5c6674" strokeWidth=".9" />
        </svg>
      </button>
      <div className="flex gap-[2px]">
        <button type="button" aria-label="Minimize" className={frameButton}>
          <svg viewBox="0 0 12 9" className="h-[9px] w-3" aria-hidden="true">
            <rect x=".5" y="4.500" width="11" height="4" rx="1" fill="#f5f8fb" stroke="#5c6674" />
          </svg>
        </button>
        <button type="button" aria-label="Restore" className={frameButton}>
          <svg viewBox="0 0 12 9" className="h-[9px] w-3" aria-hidden="true">
            <rect x="1.500" y=".5" width="9" height="8" rx="1" fill="#f5f8fb" stroke="#5c6674" />
            <rect x="4.500" y="3.500" width="3" height="2" fill="#c8d6e4" stroke="#5c6674" />
          </svg>
        </button>
        <button type="button" aria-label="Close" className={frameButton}>
          <svg viewBox="0 0 12 9" className="h-[9px] w-3" aria-hidden="true">
            <path d="m2.500 1 7 7M9.500 1l-7 7" stroke="#5c6674" strokeWidth="3.800" />
            <path d="m2.800 1.300 6.400 6.400M9.200 1.300 2.800 7.700" stroke="#f5f8fb" strokeWidth="1.900" />
          </svg>
        </button>
      </div>
    </header>
  );
}

function ToolBar() {
  return (
    <div className="flex h-7 shrink-0 items-center bg-linear-to-b from-[#f5f5f9] to-[#9693b3] pl-px">
      {toolbar.map((tool, i) =>
        tool ? (
          <button key={tool.label} type="button" aria-label={tool.label} className="w-[25px] pl-[5px]">
            <tool.Icon />
          </button>
        ) : (
          <span key={i} className="mr-px ml-[3px] h-4 w-px bg-[#f3f3f7] shadow-[-1px_0_0_#a5a3b8]" />
        ),
      )}
      <button type="button" aria-label="Help topics" className="mr-[6px] ml-auto flex items-center gap-[3px]">
        <HelpIcon />
        <svg viewBox="0 0 5 3" className="h-[3px] w-[5px]" aria-hidden="true">
          <path d="M0 0h5L2.500 3z" />
        </svg>
      </button>
    </div>
  );
}

const paneTools = "flex h-[26px] shrink-0 items-center bg-linear-to-b from-[#f5f5f9] to-[#9c99b8] pl-[6px]";

export default function App() {
  return (
    <div className="relative h-screen bg-[#47474a] p-px font-['Open_Sans','Noto_Sans',sans-serif] text-[11px] leading-4 text-black">
      <div className="flex h-full flex-col rounded-t-md bg-[#d7e4f1] px-[7px] pb-[7px]">
        <TitleBar />
        <nav className="flex h-[25px] shrink-0 items-center gap-[14px] bg-[#f0f0f0] pb-[2px] pl-[10px]" aria-label="Main menu">
          {menus.map((name) => (
            <button key={name} type="button">
              <span className="underline underline-offset-2">{name[0]}</span>
              {name.slice(1)}
            </button>
          ))}
        </nav>
        <ToolBar />

        <div className="flex min-h-0 flex-1 gap-[3px] bg-white p-[3px]">
          <aside className="flex w-[292px] shrink-0 flex-col border border-[#a0a0a0]">
            <PaneHeader title="Navigation Pane" />
            <div className={paneTools}>
              <PlugIcon />
              <button type="button" className="ml-1 flex items-center gap-1 text-[#a3a3a8]" disabled>
                New
                <svg viewBox="0 0 5 3" className="h-[3px] w-[5px]" aria-hidden="true">
                  <path d="M0 0h5L2.500 3z" fill="#96969c" />
                </svg>
              </button>
              <span className="mr-[6px] ml-2 h-4 w-px bg-[#fafafc]" />
              <button type="button" aria-label="Delete">
                <Cross size={16} className="text-[#7b7b81]" />
              </button>
            </div>
            <div className="flex min-h-0 flex-1 bg-white">
              <Tree nodes={navTree} />
              <ScrollBar />
            </div>
            <Splitter />
            <Categories items={navCategories} />
          </aside>

          <EditorPane />

          <aside className="flex w-[178px] shrink-0 flex-col border border-[#a0a0a0]">
            <PaneHeader title="Resource Pane" dim />
            <div className={paneTools}>
              <button type="button" aria-label="Search">
                <LensIcon />
              </button>
            </div>
            <div className="flex min-h-0 flex-1 bg-white">
              <Tree nodes={resourceTree} />
            </div>
            <Splitter />
            <Categories items={resourceCategories} />
          </aside>
        </div>

        <footer className="flex h-5 shrink-0 items-center justify-end gap-1 bg-linear-to-b from-[#9693b3] to-[#f5f5f9] pt-[2px] pr-[3px] text-[#a3a3a8]">
          <span>Errors</span>
          <span>Circular</span>
          <span>Translate</span>
          <span>READ</span>
          <span>CAPS</span>
          <span className="text-black">NUM</span>
        </footer>
      </div>
      <AddressDialog />
    </div>
  );
}
